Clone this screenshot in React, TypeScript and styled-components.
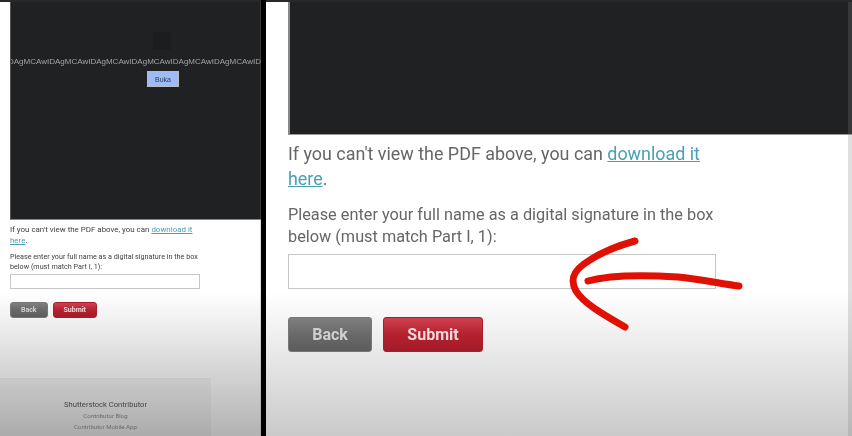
import React from 'react';
import styled, { createGlobalStyle } from 'styled-components';

const GlobalStyle = createGlobalStyle`
  html, body {
    margin: 0;
    padding: 0;
    background: #000;
  }
  * {
    box-sizing: border-box;
  }
`;

const Screen = styled.div`
  width: 852px;
  height: 436px;
  display: flex;
  overflow: hidden;
  font-family: Roboto, 'Liberation Sans', sans-serif;
  filter: blur(0.35px);
`;

const Pane = styled.div<{ $w: number; $end: string }>`
  width: ${({ $w }) => $w}px;
  height: 436px;
  flex: none;
  overflow: hidden;
  position: relative;
  background: linear-gradient(180deg, #fff 0, #fff 292px, ${({ $end }) => $end} 436px);

  &::before {
    content: '';
    position: absolute;
    top: 0;
    left: 0;
    right: 0;
    height: 2px;
    background: #28292a;
  }
`;

const Divider = styled.div`
  width: 5px;
  flex: none;
  background: #000;
`;

const LeftColumn = styled.div`
  padding: 2px 0 0 10px;
`;

const Viewer = styled.div`
  position: relative;
  height: 218px;
  background: #1f2123;
  border-left: 1px solid #555;
  border-bottom: 1px solid #888;
  color: #a2a4a6;
  font-family: 'Liberation Sans', Arial, sans-serif;
  font-size: 8px;
  overflow: hidden;
  padding-top: 55px;
`;

const IconShadow = styled.div`
  position: absolute;
  left: 142px;
  top: 30px;
  width: 18px;
  height: 18px;
  background: #1c1d1f;
`;

const Repeat = styled.div`
  white-space: nowrap;
  line-height: 10px;
  margin-left: -3px;
`;

const OpenRow = styled.div`
  display: flex;
  padding: 4px 0 0 136px;
`;

const OpenButton = styled.div`
  width: 32px;
  height: 16px;
  background: #9dbcf5;
  border: 1px solid #b9bbbd;
  color: #2b3a55;
  font-size: 7px;
  display: flex;
  align-items: center;
  justify-content: center;
`;

const Copy = styled.p<{ $size: number; $lh: number; $w: number; $top: number; $dark?: boolean }>`
  margin: ${({ $top }) => $top}px 0 0;
  width: ${({ $w }) => $w}px;
  color: ${({ $dark }) => ($dark ? '#3f3f3f' : '#666')};
  font-size: ${({ $size }) => $size}px;
  line-height: ${({ $lh }) => $lh}px;
`;

const DownloadLink = styled.a`
  color: #4a9fb5;
  text-decoration: underline;
`;

const NameField = styled.div<{ $w: number; $h: number; $top: number }>`
  width: ${({ $w }) => $w}px;
  height: ${({ $h }) => $h}px;
  margin-top: ${({ $top }) => $top}px;
  background: #fff;
  border: 1px solid #c6c6c6;
`;

const Buttons = styled.div<{ $gap: number; $top: number }>`
  display: flex;
  gap: ${({ $gap }) => $gap}px;
  margin-top: ${({ $top }) => $top}px;
`;

const FormButton = styled.div<{ $red?: boolean; $w: number; $h: number; $size: number }>`
  width: ${({ $w }) => $w}px;
  height: ${({ $h }) => $h}px;
  border-radius: 3px;
  display: flex;
  align-items: center;
  justify-content: center;
  font-size: ${({ $size }) => $size}px;
  font-weight: 700;
  color: ${({ $red }) => ($red ? '#f3d9dc' : '#d0d0d0')};
  border: 1px solid ${({ $red }) => ($red ? '#a81e2c' : '#777')};
  background: ${({ $red }) =>
    $red
      ? 'linear-gradient(180deg, #cf4250 0%, #b5212f 50%, #a31a28 100%)'
      : 'linear-gradient(180deg, #7f7f7f 0%, #696969 50%, #5c5c5c 100%)'};
`;

const Footer = styled.div`
  width: 211px;
  height: 58px;
  margin: 60px 0 0 -10px;
  padding-top: 20px;
  background: rgba(0, 0, 0, 0.035);
  border-top: 1px solid rgba(0, 0, 0, 0.02);
  text-align: center;
`;

const FooterTitle = styled.div`
  font-size: 7.6px;
  line-height: 11px;
  color: #444;
`;

const FooterLink = styled.div`
  font-size: 6.1px;
  line-height: 11px;
  color: #6a6a6a;
  &:first-of-type {
    margin-top: 4px;
  }
`;

const RightColumn = styled.div`
  padding: 2px 0 0 22px;
`;

const BigViewer = styled.div`
  height: 133px;
  background: #1f2123;
  border-left: 2px solid #888;
  border-bottom: 1px solid #999;
`;

const Arrow = styled.svg`
  position: absolute;
  left: 302px;
  top: 236px;
`;

const EdgeLine = styled.div<{ $w: number }>`
  position: absolute;
  top: 2px;
  right: 0;
  width: ${({ $w }) => $w}px;
  bottom: 0;
  background: rgba(128, 128, 128, 0.25);
`;

const text = 'DAgMCAwIDAgMCAwIDAgMCAwIDAgMCAwIDAgMCAwIDAgMCAwIDAgMCAw';

const App = () => {
  return (
    <>
      <GlobalStyle />
      <Screen>
        <Pane $w={261} $end="#b2b2b2">
          <LeftColumn>
            <Viewer>
              <IconShadow />
              <Repeat>{text}</Repeat>
              <OpenRow>
                <OpenButton>Buka</OpenButton>
              </OpenRow>
            </Viewer>
            <Copy $dark $size={7.93} $lh={11} $w={186} $top={4}>
              If you can't view the PDF above, you can <DownloadLink>download it here</DownloadLink>.
            </Copy>
            <Copy $dark $size={7.2} $lh={10} $w={195} $top={6}>
              Please enter your full name as a digital signature in the box below (must match Part I, 1):
            </Copy>
            <NameField $w={190} $h={15} $top={2} />
            <Buttons $gap={5} $top={13}>
              <FormButton $w={37.5} $h={16} $size={7}>Back</FormButton>
              <FormButton $red $w={44.5} $h={16} $size={7}>Submit</FormButton>
            </Buttons>
            <Footer>
              <FooterTitle>Shutterstock Contributor</FooterTitle>
              <FooterLink>Contributor Blog</FooterLink>
              <FooterLink>Contributor Mobile App</FooterLink>
            </Footer>
          </LeftColumn>
          <EdgeLine $w={1} />
        </Pane>
        <Divider />
        <Pane $w={586} $end="#cacaca">
          <RightColumn>
            <BigViewer />
            <Copy $size={17.9} $lh={25} $w={430} $top={6}>
              If you can't view the PDF above, you can <DownloadLink>download it here</DownloadLink>.
            </Copy>
            <Copy $size={16.3} $lh={22} $w={440} $top={13}>
              Please enter your full name as a digital signature in the box below (must match Part I, 1):
            </Copy>
            <NameField $w={428} $h={35} $top={6} />
            <Buttons $gap={11} $top={28}>
              <FormButton $w={84} $h={35} $size={16}>Back</FormButton>
              <FormButton $red $w={100} $h={35} $size={16}>Submit</FormButton>
            </Buttons>
          </RightColumn>
          <Arrow width="180" height="100" viewBox="0 0 180 100" fill="none">
            <path
              d="M67 5 C 45 11 27 20 16 28 C 5 36 2 44 8 55 C 16 68 38 80 57 91"
              stroke="#e01005"
              strokeWidth="7"
              strokeLinecap="round"
            />
            <path
              d="M20 45 C 45 38 80 39 110 41 C 130 43 150 47 171 50"
              stroke="#e01005"
              strokeWidth="7"
              strokeLinecap="round"
            />
          </Arrow>
          <EdgeLine $w={4} />
        </Pane>
      </Screen>
    </>
  );
};

export default App;
